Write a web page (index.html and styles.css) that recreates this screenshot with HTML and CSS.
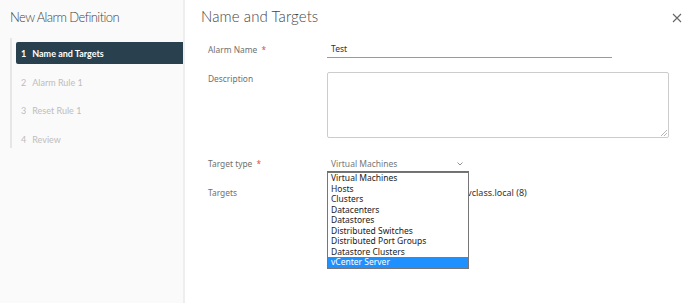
FILE: index.html
```html
<!DOCTYPE html>
<html>
<head>
<meta charset="utf-8">
<link rel="stylesheet" href="styles.css">
</head>
<body>
<div class="dialog">
  <aside class="sidebar">
    <h1 class="sidebar-title">New Alarm Definition</h1>
    <ol class="steps">
      <li class="step active"><span class="num">1</span>Name and Targets</li>
      <li class="step"><span class="num">2</span>Alarm Rule 1</li>
      <li class="step"><span class="num">3</span>Reset Rule 1</li>
      <li class="step"><span class="num">4</span>Review</li>
    </ol>
  </aside>
  <main class="content">
    <header class="content-head">
      <h2 class="content-title">Name and Targets</h2>
      <svg class="close" width="10" height="10" viewBox="0 0 10 10"><path d="M1 1L9 9M9 1L1 9" stroke="#666" stroke-width="1.1" fill="none"/></svg>
    </header>
    <div class="form">
      <div class="row row-name">
        <label class="label">Alarm Name <span class="req">*</span></label>
        <div class="input">Test</div>
      </div>
      <div class="row row-desc">
        <label class="label">Description</label>
        <div class="textarea">
          <svg class="grip" width="6" height="6" viewBox="0 0 6 6"><path d="M6 0L0 6M6 3L3 6" stroke="#999" stroke-width="0.7"/></svg>
        </div>
      </div>
      <div class="row row-type">
        <label class="label">Target type <span class="req">*</span></label>
        <div class="select-wrap">
          <div class="select">
            <span>Virtual Machines</span>
            <svg class="chev" width="6" height="4" viewBox="0 0 6 4"><path d="M0.5 0.5L3 3L5.5 0.5" stroke="#777" stroke-width="0.8" fill="none"/></svg>
          </div>
          <ul class="listbox">
            <li>Virtual Machines</li>
            <li>Hosts</li>
            <li>Clusters</li>
            <li>Datacenters</li>
            <li>Datastores</li>
            <li>Distributed Switches</li>
            <li>Distributed Port Groups</li>
            <li>Datastore Clusters</li>
            <li class="sel">vCenter Server</li>
          </ul>
        </div>
      </div>
      <div class="row row-targets">
        <label class="label">Targets</label>
        <div class="targets-val">sa-vcsa-01.vclass.local (8)</div>
      </div>
    </div>
  </main>
</div>
</body>
</html>
```

FILE: styles.css
```css
* { box-sizing: border-box; }
html, body { margin: 0; padding: 0; }
body {
  width: 685px;
  height: 303px;
  overflow: hidden;
  background: #fff;
  font-family: "Noto Sans", "Open Sans", sans-serif;
  color: #333;
}
.dialog {
  display: flex;
  height: 303px;
}
.sidebar {
  width: 185px;
  flex: none;
  background: #fafafa;
  border-right: 2px solid #eeeeee;
  padding: 8px 0 0 10px;
}
.sidebar-title {
  margin: 0;
  font-family: "Lato", sans-serif;
  font-weight: 300;
  font-size: 13px;
  line-height: 18px;
  color: #444;
  letter-spacing: -0.6px;
}
.steps {
  list-style: none;
  margin: 12px 0 0 0;
  padding: 4px 0 0 4px;
  border-left: 2px solid #e6e6e6;
  height: 110px;
}
.step {
  height: 28.5px;
  display: flex;
  align-items: center;
  padding-left: 5px;
  font-family: "Lato", sans-serif;
  font-size: 9px;
  color: #bdbdbd;
}
.step .num { margin-right: 6px; }
.step.active {
  height: 22px;
  margin-bottom: 4px;
  background: #29414e;
  color: #fff;
  font-weight: 700;
  border-radius: 2px 0 0 2px;
}
.content {
  flex: 1;
  padding: 0 0 0 16px;
  position: relative;
}
.content-head {
  display: flex;
  justify-content: space-between;
  align-items: center;
  height: 32px;
  padding-right: 3px;
}
.content-title {
  margin: 0;
  font-family: "Lato", sans-serif;
  font-weight: 300;
  font-size: 15px;
  color: #444;
  letter-spacing: 0.1px;
}
.close { margin-top: 3px; }
.form {
  padding-left: 7px;
  padding-top: 10px;
}
.row {
  display: grid;
  grid-template-columns: 119px 1fr;
  font-size: 8px;
}
.label {
  color: #707070;
  font-size: 8.4px;
}
.req { color: #d9534f; margin-left: 2px; }
.row-name { height: 30px; }
.row-name .label { padding-top: 2px; }
.input {
  width: 285px;
  height: 16px;
  border-bottom: 1px solid #9a9a9a;
  padding: 1px 0 0 4px;
  font-size: 8.5px;
  color: #333;
}
.row-desc { height: 85px; }
.row-desc .label { padding-top: 1px; }
.textarea {
  width: 342px;
  height: 66px;
  border: 1px solid #ccc;
  border-radius: 2px;
  position: relative;
}
.grip { position: absolute; right: 1px; bottom: 1px; }
.row-type { height: 29px; }
.row-type .label { padding-top: 1px; }
.select-wrap { position: relative; width: 142px; }
.select {
  height: 16px;
  display: flex;
  justify-content: space-between;
  align-items: center;
  padding: 0 6px 2px 4px;
  border-bottom: 2px solid #0095d3;
  color: #777;
  font-size: 8.5px;
}
.chev { margin-top: 1px; }
.listbox {
  position: absolute;
  left: 0;
  top: 15px;
  width: 142px;
  margin: 0;
  padding: 0;
  list-style: none;
  background: #fff;
  border: 1px solid #767676;
  z-index: 2;
}
.listbox li {
  height: 10.5px;
  line-height: 10.5px;
  padding-left: 3px;
  font-size: 8.5px;
  color: #222;
  white-space: nowrap;
}
.listbox li.sel {
  background: #1e90ff;
  color: #fff;
}
.row-targets .label { padding-top: 1px; }
.targets-val {
  font-size: 9px;
  color: #333;
  padding-left: 94px;
  padding-top: 0;
  white-space: nowrap;
}
```
